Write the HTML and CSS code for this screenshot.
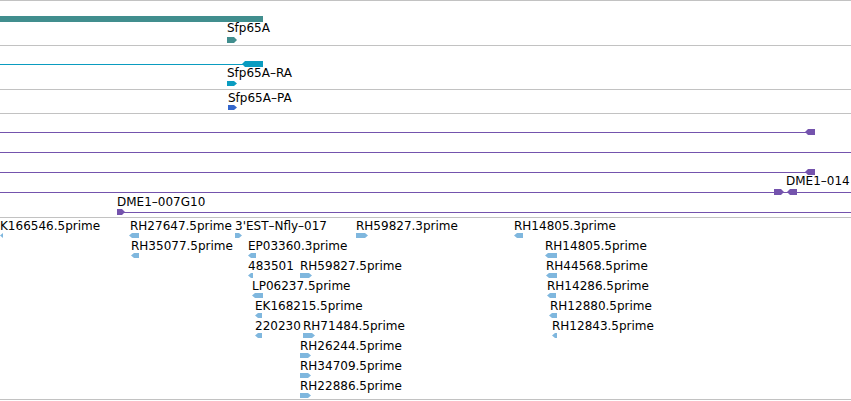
FILE: index.html
```html
<!DOCTYPE html>
<html>
<head>
    <title>tracks</title>
    <meta charset="utf-8">
    <link rel="stylesheet" href="styles.css">
</head>
<body>
    <div id="view">
        <div class="track" id="gene" style="height: 44px;"></div>
        <div class="track" id="transcript" style="height: 43px;"></div>
        <div class="track" id="protein" style="height: 23px;"></div>
        <div class="track" id="clones" style="height: 103px;"></div>
        <div class="track last" id="ests" style="height: 181px;"></div>
    </div>

    <script>
        // x, y are in track coordinates (px)
        function arrow(dir, w, h, color) {
            var pts;
            if (dir == "right") {
                pts = "0,0 " + (w - 3) + ",0 " + w + "," + (h / 2) + " " + (w - 3) + "," + h + " 0," + h;
            } else {
                pts = "0," + (h / 2) + " 3,0 " + w + ",0 " + w + "," + h + " 3," + h;
            }
            return '<svg width="' + w + '" height="' + h + '"><polygon points="' + pts + '" fill="' + color + '"/></svg>';
        }

        function addLabel(track, x, y, text) {
            var el = document.createElement("div");
            el.className = "label";
            el.textContent = text;
            el.style.left = x + "px";
            el.style.top = y + "px";
            document.getElementById(track).appendChild(el);
        }

        function addGlyph(track, x, y, w, h, dir, color) {
            var el = document.createElement("div");
            el.className = "glyph";
            el.innerHTML = arrow(dir, w, h, color);
            el.style.left = x + "px";
            el.style.top = y + "px";
            document.getElementById(track).appendChild(el);
        }

        function addLine(track, x1, x2, y, color, cls) {
            var el = document.createElement("div");
            el.className = cls || "intron";
            el.style.left = x1 + "px";
            el.style.width = (x2 - x1) + "px";
            el.style.top = y + "px";
            el.style.background = color;
            document.getElementById(track).appendChild(el);
        }

        var teal = "#418e8e", cyan = "#0a9cc0", blue = "#3366cc", purple = "#7453ad", est = "#7fb7de";

        // gene
        addLine("gene", 0, 263, 15, teal, "exon");
        addLabel("gene", 227, 20, "Sfp65A");
        addGlyph("gene", 227, 36, 10, 6, "right", teal);

        // transcript
        addLine("transcript", 0, 250, 18, cyan);
        addGlyph("transcript", 242, 15, 21, 6, "left", cyan);
        addLabel("transcript", 227, 20, "Sfp65A–RA");
        addGlyph("transcript", 227, 35, 10, 5, "right", cyan);

        // protein
        addLabel("protein", 228, 1, "Sfp65A–PA");
        addGlyph("protein", 228, 15, 9, 5, "right", blue);

        // clones
        addLine("clones", 0, 810, 18, purple);
        addGlyph("clones", 805, 15, 10, 6, "left", purple);
        addLine("clones", 0, 851, 38, purple);
        addLine("clones", 0, 810, 58, purple);
        addGlyph("clones", 805, 55, 10, 6, "left", purple);
        addLabel("clones", 786, 60, "DME1–014");
        addLine("clones", 0, 851, 78, purple);
        addGlyph("clones", 774, 75, 10, 6, "right", purple);
        addGlyph("clones", 787, 75, 10, 6, "left", purple);
        addLabel("clones", 117, 81, "DME1–007G10");
        addLine("clones", 120, 851, 98, purple);
        addGlyph("clones", 117, 95, 8, 6, "right", purple);

        // ests: [row, text x, label, arrow x, arrow w, dir]
        var ests = [
            [0, 0, "K166546.5prime", 0, 3, "left"],
            [0, 130, "RH27647.5prime", 129, 10, "left"],
            [0, 235, "3'EST–Nfly–017", 235, 7, "right"],
            [0, 356, "RH59827.3prime", 356, 12, "right"],
            [0, 514, "RH14805.3prime", 514, 9, "left"],
            [1, 131, "RH35077.5prime", 131, 8, "left"],
            [1, 248, "EP03360.3prime", 248, 8, "left"],
            [1, 545, "RH14805.5prime", 545, 12, "left"],
            [2, 248, "483501", 248, 5, "left"],
            [2, 300, "RH59827.5prime", 300, 12, "right"],
            [2, 546, "RH44568.5prime", 546, 11, "left"],
            [3, 252, "LP06237.5prime", 252, 11, "left"],
            [3, 547, "RH14286.5prime", 547, 9, "left"],
            [4, 255, "EK168215.5prime", 255, 7, "left"],
            [4, 550, "RH12880.5prime", 549, 8, "left"],
            [5, 255, "220230", 255, 7, "left"],
            [5, 303, "RH71484.5prime", 303, 12, "right"],
            [5, 552, "RH12843.5prime", 552, 5, "left"],
            [6, 300, "RH26244.5prime", 300, 11, "right"],
            [7, 300, "RH34709.5prime", 300, 11, "right"],
            [8, 300, "RH22886.5prime", 300, 11, "right"]
        ];
        for (var i = 0; i < ests.length; i++) {
            var e = ests[i];
            addLabel("ests", e[1], 1 + e[0] * 20, e[2]);
            addGlyph("ests", e[3], 15 + e[0] * 20, e[4], 5, e[5], est);
        }
    </script>
</body>
</html>
```

FILE: styles.css
```css
body {
    margin: 0;
    overflow: hidden;
    background: white;
    font-family: "DejaVu Sans", sans-serif;
    font-size: 12px;
    color: black;
}

#view {
    width: 851px;
}

.track {
    position: relative;
    border-top: 1px solid #c2c2c2;
    overflow: hidden;
}

.track.last {
    border-bottom: 1px solid #c2c2c2;
}

.label {
    position: absolute;
    line-height: 14px;
    white-space: nowrap;
}

.glyph {
    position: absolute;
    line-height: 0;
}

.glyph svg {
    display: block;
}

.intron {
    position: absolute;
    height: 1px;
}

.exon {
    position: absolute;
    height: 6px;
}
```
